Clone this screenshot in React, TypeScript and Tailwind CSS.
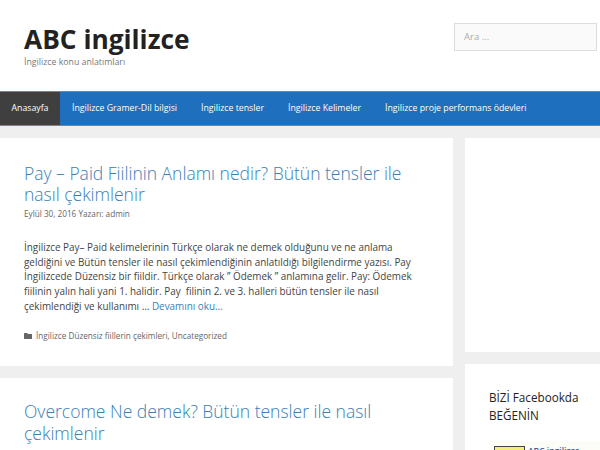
const sans = "font-['Open_Sans','Noto_Sans',sans-serif]";

const navItems = [
  "İngilizce Gramer-Dil bilgisi",
  "İngilizce tensler",
  "İngilizce Kelimeler",
  "İngilizce proje performans ödevleri",
];

const FolderIcon = () => (
  <svg viewBox="0 0 16 12" className="h-[6px] w-[8px] fill-[#666]">
    <path d="M1 0h5l2 2h7a1 1 0 0 1 1 1v8a1 1 0 0 1-1 1H1a1 1 0 0 1-1-1V1a1 1 0 0 1 1-1z" />
  </svg>
);

export default function App() {
  return (
    <div className={`${sans} h-[450px] w-[600px] overflow-hidden bg-[#efefef]`}>
      <header className="flex h-[91px] justify-between bg-white pl-[24px] pr-[3px]">
        <div className="pt-[23px]">
          <h1 className="text-[26.3px] font-bold leading-[33px] text-[#222]">ABC ingilizce</h1>
          <p className="mt-[1px] text-[8.75px] leading-[11px] text-[#777]">İngilizce konu anlatımları</p>
        </div>
        <div className="pt-[23px]">
          <div className="flex h-[28px] w-[143px] items-center border border-[#ddd] bg-[#fafafa] pl-[9px] text-[9.5px] text-[#aaa]">
            Ara ...
          </div>
        </div>
      </header>
      <nav className="flex h-[35px] border-y border-[#4a90d0] bg-[#1e6fbd] text-[8.75px] text-white">
        <a className="flex w-[60px] shrink-0 items-center justify-center bg-[#3f3f3f]">Anasayfa</a>
        {navItems.map((item) => (
          <a key={item} className="flex items-center px-[12px]">
            {item}
          </a>
        ))}
      </nav>
      <div className="mt-[12px] flex items-start gap-[12px]">
        <main className="flex w-[453px] shrink-0 flex-col gap-[12px]">
          <article className="h-[228px] bg-white pl-[24px] pr-[20px] pt-[25px]">
            <h2 className="text-[17.5px] font-light leading-[21px] text-[#3a80b6]">
              Pay – Paid Fiilinin Anlamı nedir? Bütün tensler ile nasıl çekimlenir
            </h2>
            <p className="mt-[2px] text-[8.2px] leading-[14px] text-[#666]">Eylül 30, 2016 Yazarı: admin</p>
            <p className="mt-[19px] text-[9.9px] leading-[14.7px] text-[#444]">
              İngilizce Pay– Paid kelimelerinin Türkçe olarak ne demek olduğunu ve ne anlama geldiğini ve Bütün
              tensler ile nasıl çekimlendiğinin anlatıldığı bilgilendirme yazısı. Pay İngilizcede Düzensiz bir
              fiildir. Türkçe olarak ” Ödemek ” anlamına gelir. Pay: Ödemek fiilinin yalın hali yani 1. halidir.
              Pay{"\u00a0"} filinin 2. ve 3. halleri bütün tensler ile nasıl çekimlendiği ve kullanımı …{" "}
              <span className="text-[#3a80b6]">Devamını oku…</span>
            </p>
            <div className="mt-[15px] flex items-center gap-[4px] text-[8.2px] leading-[14px] text-[#666]">
              <FolderIcon />
              <span>İngilizce Düzensiz fiillerin çekimleri, Uncategorized</span>
            </div>
          </article>
          <article className="h-[100px] bg-white pl-[24px] pr-[20px] pt-[23px]">
            <h2 className="text-[17.5px] font-light leading-[21.5px] text-[#3a80b6]">
              Overcome Ne demek? Bütün tensler ile nasıl çekimlenir
            </h2>
          </article>
        </main>
        <aside className="flex min-w-0 flex-1 flex-col gap-[12px]">
          <div className="h-[214px] bg-white" />
          <div className="h-[100px] bg-white pl-[24px] pt-[24px]">
            <h4 className="text-[11.7px] leading-[18px] text-[#222]">BİZİ Facebookda BEĞENİN</h4>
            <div className="mt-[17px] flex gap-[3px] bg-[#fdfdf8] pl-[5px] pt-[5px]">
              <div className="h-[30px] w-[31px] shrink-0 border border-[#444] bg-[#f3ee7a]" />
              <span className="text-[8.5px] font-semibold leading-[10px] text-[#3b5998]">ABC ingilizce</span>
            </div>
          </div>
        </aside>
      </div>
    </div>
  );
}
